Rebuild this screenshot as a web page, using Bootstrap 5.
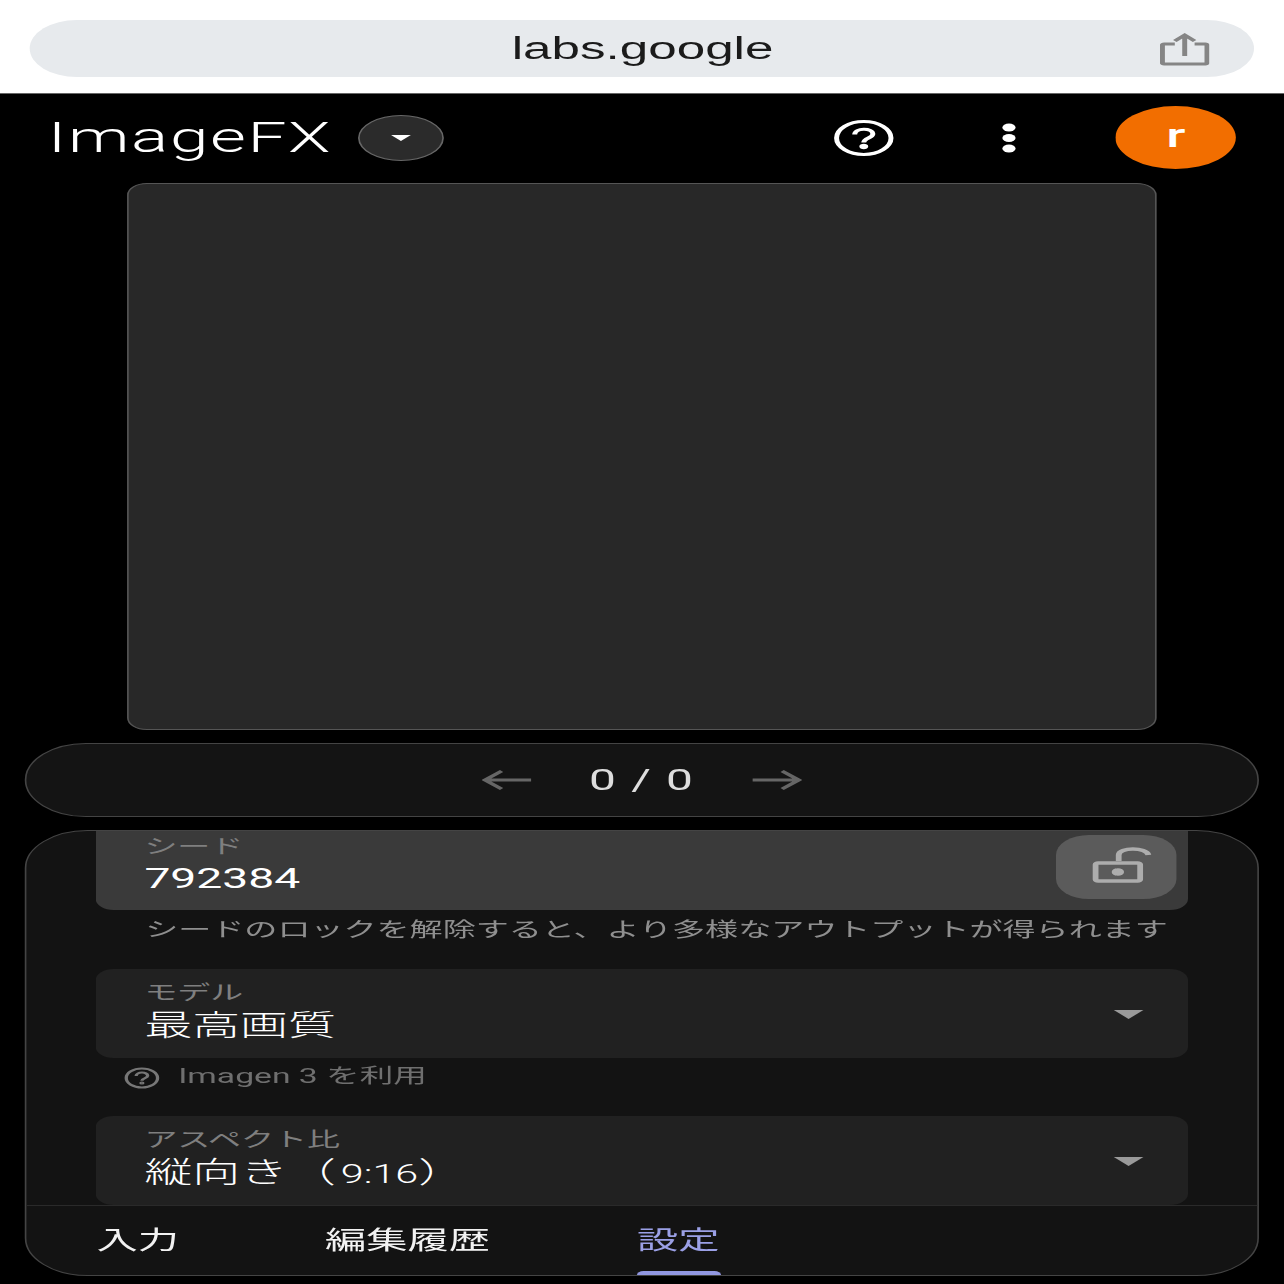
<!DOCTYPE html>
<html lang="ja">
<head>
    <meta charset="UTF-8">
    <meta name="viewport" content="width=device-width, initial-scale=1.0">
    <title>ImageFX</title>
    <link href="https://cdn.jsdelivr.net/npm/bootstrap@5.3.0/dist/css/bootstrap.min.css" rel="stylesheet">
    <style>
        html, body {
            height: 1284px;
            overflow: hidden;
            background-color: #000;
        }
        body {
            font-family: Roboto, "Noto Sans CJK JP", sans-serif;
        }
        /* the reference is a phone capture stretched sideways, so the whole page is too */
        .stage {
            width: 779px;
            height: 1284px;
            transform: scaleX(1.65);
            transform-origin: 0 0;
        }
        .browser-bar {
            height: 94px;
            padding: 20px 18.8px 0 18.2px;
            background-color: #fff;
            border-bottom: 1px solid #666;
        }
        .url-pill {
            height: 57px;
            padding: 0 27.5px 0 28px;
            background-color: #e7eaed;
            font-family: "Liberation Sans", sans-serif;
            font-size: 31px;
            color: #1b1b1b;
        }
        .url-text {
            flex: 1;
            text-align: center;
            padding-left: 30px;
            line-height: 1;
        }
        .top-nav {
            height: 89px;
            padding: 0 29.8px 2px 29px;
        }
        .brand-name {
            font-size: 42px;
            font-weight: 300;
            letter-spacing: 1px;
            line-height: 1;
            color: #fff;
            margin-top: 1px;
        }
        .brand-toggle {
            width: 52.5px;
            height: 46px;
            margin-left: 15.5px;
            background-color: #2b2b2b;
            border: 1px solid #666;
            border-radius: 50%;
        }
        .tri {
            width: 0;
            height: 0;
            border-left: 9px solid transparent;
            border-right: 9px solid transparent;
            border-top: 9px solid #9a9a9a;
        }
        .tri-small {
            border-left-width: 6px;
            border-right-width: 6px;
            border-top: 6px solid #fff;
        }
        .help-btn {
            margin-left: auto;
        }
        .dots-btn {
            margin-left: 64.5px;
            margin-right: 60.5px;
        }
        .avatar-dot {
            width: 73px;
            height: 63px;
            background-color: #f26e00;
            border-radius: 50%;
            color: #fff;
            font-size: 33px;
            font-weight: 500;
            line-height: 1;
            padding-bottom: 5px;
        }
        .image-box {
            width: 624px;
            height: 547px;
            margin: 0 0 0 77px;
            background-color: #282828;
            border: 1px solid #555;
            border-radius: 12px;
        }
        .pager-bar {
            width: 748px;
            height: 74px;
            margin: 13px 0 13px 15px;
            background-color: #141414;
            border: 1px solid #444;
            border-radius: 37px;
        }
        .pager-text {
            width: 104px;
            margin: 0 15px;
            text-align: center;
            font-size: 29px;
            line-height: 1;
            letter-spacing: 1px;
            color: #ddd;
        }
        .settings-box {
            width: 748px;
            height: 446px;
            margin-left: 15px;
            background-color: #131313;
            border: 1px solid #444;
            border-radius: 38px;
            overflow: hidden;
        }
        .settings-scroll {
            height: 374px;
            padding: 0 42px;
            overflow: hidden;
        }
        .field-box {
            position: relative;
            height: 89px;
            padding: 11px 29.5px 0;
            background-color: #212121;
            border-radius: 11px;
        }
        .seed-field {
            height: 79px;
            padding-top: 3px;
            background-color: #3a3a3a;
            border-radius: 0 0 11px 11px;
        }
        .field-label {
            font-size: 20px;
            line-height: 26px;
            color: #7f7f7f;
        }
        .field-value {
            font-size: 29px;
            font-weight: 300;
            line-height: 40px;
            color: #fff;
        }
        .seed-value {
            font-size: 28px;
            font-weight: 400;
            margin-top: -1px;
        }
        .ratio-value {
            word-spacing: -7px;
        }
        .ratio-digits {
            font-size: 25px;
            margin-left: 3px;
        }
        .field-arrow {
            position: absolute;
            right: 27px;
            top: 41px;
        }
        .unlock-btn {
            position: absolute;
            right: 7px;
            top: 4px;
            width: 73px;
            height: 64px;
            background-color: #5b5b5b;
            border-radius: 20px;
        }
        .unlock-btn svg {
            margin: 0 0 4px 7px;
        }
        .seed-hint {
            height: 59px;
            padding: 7px 0 0 30px;
            font-size: 20.05px;
            line-height: 26px;
            color: #8f8f8f;
            white-space: nowrap;
        }
        .model-hint {
            height: 58px;
            padding: 5px 0 0 17px;
            font-size: 20.4px;
            line-height: 26px;
            color: #6f6f6f;
            gap: 11px;
        }
        .tab-row {
            position: relative;
            height: 70px;
            padding-left: 42.5px;
            border-top: 1px solid #2a2a2a;
            font-size: 25px;
            line-height: 1;
            color: #f2f2f2;
        }
        .tab-history {
            margin-left: 88.5px;
        }
        .tab-active {
            margin-left: 89px;
            color: #9ba0e6;
        }
        .tab-marker {
            position: absolute;
            left: 369.5px;
            bottom: 0;
            width: 51px;
            height: 4px;
            background-color: #9096e0;
            border-radius: 4px 4px 0 0;
        }
    </style>
</head>
<body>
    <div class="stage">
        <div class="browser-bar">
            <div class="url-pill rounded-pill d-flex align-items-center">
                <div class="url-text">labs.google</div>
                <svg width="30" height="34" viewBox="0 0 30 34" fill="none" stroke="#858585" stroke-width="3">
                    <path d="M9 12H2.5a1 1 0 0 0-1 1v18a1 1 0 0 0 1 1h25a1 1 0 0 0 1-1V13a1 1 0 0 0-1-1H21"/>
                    <path d="M15 24V3M9 9l6-6 6 6"/>
                </svg>
            </div>
        </div>

        <div class="top-nav d-flex align-items-center">
            <div class="brand-name">ImageFX</div>
            <div class="brand-toggle d-flex align-items-center justify-content-center">
                <div class="tri tri-small"></div>
            </div>
            <div class="help-btn d-flex">
                <svg width="37" height="38" viewBox="0 0 37 38" fill="none" stroke="#fff" stroke-width="3">
                    <ellipse cx="18.5" cy="19" rx="16.5" ry="16.5"/>
                    <path d="M13 15.5c0-7 11-7 11-.5 0 4-5.5 4-5.5 8.5"/>
                    <circle cx="18.5" cy="27.5" r="1.2" fill="#fff"/>
                </svg>
            </div>
            <div class="dots-btn d-flex">
                <svg width="9" height="30" viewBox="0 0 9 30" fill="#fff">
                    <circle cx="4.5" cy="4.5" r="4"/>
                    <circle cx="4.5" cy="15" r="4"/>
                    <circle cx="4.5" cy="25.5" r="4"/>
                </svg>
            </div>
            <div class="avatar-dot d-flex align-items-center justify-content-center">r</div>
        </div>

        <div class="image-box"></div>

        <div class="pager-bar d-flex align-items-center justify-content-center">
            <svg width="30" height="22" viewBox="0 0 30 22" fill="none" stroke="#666" stroke-width="3">
                <path d="M30 11H2M12 2 2 11l10 9"/>
            </svg>
            <div class="pager-text">0 / 0</div>
            <svg width="30" height="22" viewBox="0 0 30 22" fill="none" stroke="#666" stroke-width="3">
                <path d="M0 11h28M18 2l10 9-10 9"/>
            </svg>
        </div>

        <div class="settings-box">
            <div class="settings-scroll">
                <div class="field-box seed-field">
                    <div class="field-label">シード</div>
                    <div class="field-value seed-value">792384</div>
                    <div class="unlock-btn d-flex align-items-center justify-content-center">
                        <svg width="38" height="38" viewBox="0 0 38 38" fill="none" stroke="#adadad" stroke-width="3.5">
                            <rect x="3" y="17" width="27" height="18" rx="1.5"/>
                            <circle cx="16.5" cy="26" r="2" fill="#adadad"/>
                            <path d="M17 15V9c0-8 17-8 18 0"/>
                        </svg>
                    </div>
                </div>
                <div class="seed-hint">シードのロックを解除すると、より多様なアウトプットが得られます</div>

                <div class="field-box">
                    <div class="field-label">モデル</div>
                    <div class="field-value">最高画質</div>
                    <div class="tri field-arrow"></div>
                </div>
                <div class="model-hint d-flex align-items-start">
                    <svg class="mt-1" width="22" height="22" viewBox="0 0 22 22" fill="none" stroke="#777" stroke-width="2">
                        <circle cx="11" cy="11" r="9.5"/>
                        <path d="M7.5 9c0-4.500 7-4.500 7-.3 0 2.500-3.500 2.500-3.500 5"/>
                        <circle cx="11" cy="16" r=".6" fill="#777"/>
                    </svg>
                    <div>Imagen 3 を利用</div>
                </div>

                <div class="field-box">
                    <div class="field-label">アスペクト比</div>
                    <div class="field-value ratio-value">縦向き （<span class="ratio-digits">9:16</span>）</div>
                    <div class="tri field-arrow"></div>
                </div>
            </div>

            <div class="tab-row d-flex align-items-center">
                <div>入力</div>
                <div class="tab-history">編集履歴</div>
                <div class="tab-active">設定</div>
                <div class="tab-marker"></div>
            </div>
        </div>
    </div>

    <script src="https://cdn.jsdelivr.net/npm/bootstrap@5.3.0/dist/js/bootstrap.bundle.min.js"></script>
</body>
</html>
